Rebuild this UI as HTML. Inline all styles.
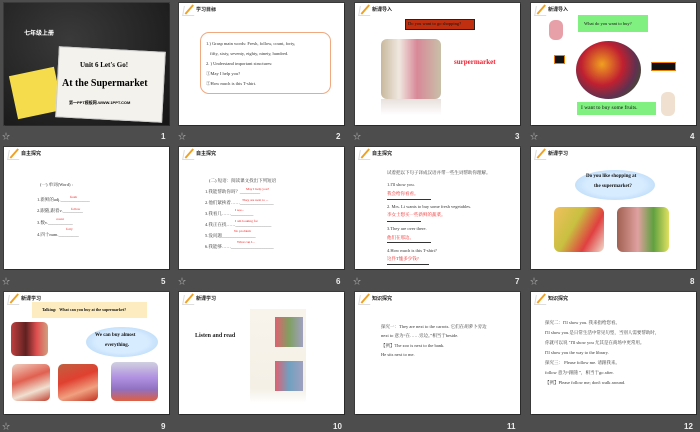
<!DOCTYPE html>
<html><head><meta charset="utf-8"><style>
*{margin:0;padding:0;box-sizing:border-box}
body{width:700px;height:431px;background:#4d4d4d;position:relative;overflow:hidden;font-family:"Liberation Serif","Noto Serif CJK SC",serif}
.s{position:absolute;width:165px;height:122px;background:#fff;overflow:hidden;box-shadow:1px 1px 0 #2a2a2a,0 0 0 1px #3a3a3a}
.a{position:absolute}
.n{position:absolute;color:#eee;font:bold 8px "Liberation Sans",sans-serif}
.st{position:absolute;color:#bbb;font:8px "Noto Sans CJK SC",sans-serif}
.hd{position:absolute;left:4px;top:3px;width:12px;height:10px;border-left:1px solid #ddd;border-bottom:1px solid #ddd;transform:skewX(-10deg)}
.hd:after{content:"";position:absolute;left:4px;top:-2px;width:2px;height:11px;background:#f0a020;transform:rotate(35deg)}
.ht{position:absolute;left:17px;top:3px;font:bold 5px "Noto Sans CJK SC",sans-serif;color:#222}
.t{position:absolute;font-size:4.5px;color:#333;white-space:nowrap;line-height:1}
.r{color:#e22}
.ln{position:absolute;height:0;border-top:.6px solid #333}
</style></head><body>

<!-- 1 -->
<div class="s" style="left:4px;top:3px;background:radial-gradient(ellipse at 40% 30%,#3a3a3a,#151515)">
<div class="a" style="left:20px;top:25px;color:#fff;font:bold 6px 'Noto Sans CJK SC',sans-serif">七年级上册</div>
<div class="a" style="left:9px;top:68px;width:46px;height:44px;background:#f4dc4c;transform:rotate(-12deg)"></div>
<div class="a" style="left:53px;top:46px;width:107px;height:71px;background:#f4f2ec;transform:rotate(3deg);border:1px solid #ccc"></div>
<div class="a" style="left:76px;top:58px;font:bold 7px 'Liberation Serif',serif">Unit 6 Let's Go!</div>
<div class="a" style="left:58px;top:75px;font:bold 10px 'Liberation Serif',serif">At the Supermarket</div>
<div class="a" style="left:65px;top:97px;font:bold 4px 'Liberation Sans','Noto Sans CJK SC',sans-serif">第一PPT模板网-WWW.1PPT.COM</div>
</div>
<div class="st" style="left:2px;top:131px">☆</div><div class="n" style="left:161px;top:132px">1</div>

<!-- 2 -->
<div class="s" style="left:179px;top:3px">
<div class="hd"></div><div class="ht">学习目标</div>
<div class="a" style="left:21px;top:29px;width:131px;height:62px;border:1px solid #f0a880;border-radius:9px"></div>
<div class="t" style="left:27px;top:39px">1.) Grasp main words: Fresh, follow, count, forty,</div>
<div class="t" style="left:31px;top:49px">fifty, sixty, seventy, eighty, ninety, hundred.</div>
<div class="t" style="left:27px;top:59px">2. ) Understand important structures:</div>
<div class="t" style="left:27px;top:69px">①May I help you?</div>
<div class="t" style="left:27px;top:79px">②How much is this T-shirt.</div>
</div>
<div class="st" style="left:178px;top:131px">☆</div><div class="n" style="left:336px;top:132px">2</div>

<!-- 3 -->
<div class="s" style="left:355px;top:3px">
<div class="hd"></div><div class="ht">新课导入</div>
<div class="a" style="left:50px;top:16px;width:70px;height:11px;background:#c03010;border:1px solid #222"></div>
<div class="t" style="left:53px;top:19px;color:#111">Do you want to go shopping?</div>
<div class="a" style="left:26px;top:36px;width:60px;height:60px;border-radius:6px;background:linear-gradient(90deg,#c8b89c,#f0e8e0 30%,#d88898 60%,#c8c0a8)"></div>
<div class="a" style="left:26px;top:96px;width:60px;height:16px;background:linear-gradient(#e8e0dc,#fff)"></div>
<div class="a" style="left:99px;top:55px;font:bold 7px 'Liberation Serif',serif;color:#f02030">surpermarket</div>
</div>
<div class="st" style="left:353px;top:131px">☆</div><div class="n" style="left:515px;top:132px">3</div>

<!-- 4 -->
<div class="s" style="left:531px;top:3px">
<div class="hd"></div><div class="ht">新课导入</div>
<div class="a" style="left:47px;top:12px;width:70px;height:17px;background:#80f080"></div>
<div class="t" style="left:53px;top:19px;color:#111">What do you want to buy?</div>
<div class="a" style="left:18px;top:17px;width:14px;height:20px;background:#e8a0a8;border-radius:6px"></div>
<div class="a" style="left:23px;top:52px;width:11px;height:9px;background:#111;border:1px solid #f08000"></div>
<div class="a" style="left:45px;top:38px;width:65px;height:58px;border-radius:50%;background:radial-gradient(circle at 40% 40%,#f0a020,#c02030 40%,#603050 65%,#306020 90%)"></div>
<div class="a" style="left:120px;top:59px;width:25px;height:9px;background:#111;border:1px solid #f08000"></div>
<div class="a" style="left:46px;top:99px;width:79px;height:13px;background:#80f080"></div>
<div class="t" style="left:50px;top:103px;font-size:5.5px;color:#111">I want to buy some fruits.</div>
<div class="a" style="left:130px;top:89px;width:14px;height:24px;background:#f0e0d0;border-radius:6px"></div>
</div>
<div class="st" style="left:530px;top:131px">☆</div><div class="n" style="left:690px;top:132px">4</div>

<!-- 5 -->
<div class="s" style="left:4px;top:147px">
<div class="hd"></div><div class="ht">自主探究</div>
<div class="t" style="left:36px;top:36px">(一) 单词(Word) :</div>
<div class="t" style="left:33px;top:51px">1.新鲜的adj._____________</div><div class="t r" style="left:66px;top:49px;font-size:3.5px">fresh</div>
<div class="t" style="left:33px;top:62px">2.跟随,跟着v._________</div><div class="t r" style="left:67px;top:61px;font-size:3.5px">follow</div>
<div class="t" style="left:33px;top:74px">3.数v.___________</div><div class="t r" style="left:52px;top:71px;font-size:3.5px">count</div>
<div class="t" style="left:33px;top:86px">4.四十num._________</div><div class="t r" style="left:62px;top:81px;font-size:3.5px">forty</div>
</div>
<div class="st" style="left:2px;top:276px">☆</div><div class="n" style="left:161px;top:277px">5</div>

<!-- 6 -->
<div class="s" style="left:179px;top:147px">
<div class="hd"></div><div class="ht">自主探究</div>
<div class="t" style="left:30px;top:32px">(二) 短语：阅读课文找出下列短语</div>
<div class="t" style="left:26px;top:43px">1.我能帮助你吗？_________</div><div class="t r" style="left:67px;top:41px;font-size:3.5px">May I help you?</div>
<div class="t" style="left:26px;top:54px">2.他们紧挨着……_______________</div><div class="t r" style="left:63px;top:52px;font-size:3.5px">They are next to ...</div>
<div class="t" style="left:26px;top:65px">3.我看几……__________</div><div class="t r" style="left:56px;top:62px;font-size:3.5px">I see...</div>
<div class="t" style="left:26px;top:76px">4.我正在找……________________</div><div class="t r" style="left:56px;top:73px;font-size:3.5px">I am looking for</div>
<div class="t" style="left:26px;top:87px">5.没问题_______________</div><div class="t r" style="left:55px;top:83px;font-size:3.5px">No problem</div>
<div class="t" style="left:26px;top:98px">6.我能够……___________________</div><div class="t r" style="left:58px;top:94px;font-size:3.5px">What can I...</div>
</div>
<div class="st" style="left:178px;top:276px">☆</div><div class="n" style="left:336px;top:277px">6</div>

<!-- 7 -->
<div class="s" style="left:355px;top:147px">
<div class="hd"></div><div class="ht">自主探究</div>
<div class="t" style="left:32px;top:24px">试着把以下句子译成汉语并带一些生词帮助你理解。</div>
<div class="t" style="left:32px;top:36px">1.I'll show you.</div><div class="t r" style="left:32px;top:45px">我会给你看看。</div><div class="ln" style="left:32px;top:52px;width:44px"></div>
<div class="t" style="left:32px;top:58px">2. Mrs. Li wants to buy some fresh vegetables.</div><div class="t r" style="left:32px;top:66px">李女士想买一些新鲜的蔬菜。</div><div class="ln" style="left:32px;top:74px;width:34px"></div>
<div class="t" style="left:32px;top:80px">3.They are over there.</div><div class="t r" style="left:32px;top:89px">他们在那边。</div><div class="ln" style="left:32px;top:95px;width:44px"></div>
<div class="t" style="left:32px;top:102px">4.How much is this T-shirt?</div><div class="t r" style="left:32px;top:110px">这件T恤多少钱?</div><div class="ln" style="left:32px;top:117px;width:42px"></div>
</div>
<div class="st" style="left:353px;top:276px">☆</div><div class="n" style="left:515px;top:277px">7</div>

<!-- 8 -->
<div class="s" style="left:531px;top:147px">
<div class="hd"></div><div class="ht">新课学习</div>
<div class="a" style="left:44px;top:23px;width:80px;height:30px;border-radius:50%;background:radial-gradient(ellipse,#d8ecff 50%,#a8d0f4)"></div>
<div class="t" style="left:55px;top:27px;font-weight:bold;font-size:5px;color:#111">Do you like shopping at</div>
<div class="t" style="left:63px;top:37px;font-weight:bold;font-size:5px;color:#111">the supermarket?</div>
<div class="a" style="left:23px;top:60px;width:50px;height:45px;border-radius:6px;background:linear-gradient(120deg,#f0c060,#c8c040 40%,#e04040 70%,#f0e0d0)"></div>
<div class="a" style="left:86px;top:60px;width:52px;height:45px;border-radius:6px;background:linear-gradient(90deg,#a06050,#e0a0a0 40%,#60a040 70%,#e0e060)"></div>
</div>
<div class="st" style="left:530px;top:276px">☆</div><div class="n" style="left:690px;top:277px">8</div>

<!-- 9 -->
<div class="s" style="left:4px;top:292px">
<div class="hd"></div><div class="ht">新课学习</div>
<div class="a" style="left:28px;top:10px;width:115px;height:16px;background:#fcecc0"></div>
<div class="t" style="left:38px;top:16px;font-weight:bold;font-size:4px;color:#111">Talking: &nbsp; What can you buy at the supermarket?</div>
<div class="a" style="left:7px;top:30px;width:37px;height:34px;border-radius:5px;background:linear-gradient(90deg,#c04040,#602020 40%,#e05050 70%,#d0a080)"></div>
<div class="a" style="left:82px;top:35px;width:72px;height:30px;border-radius:50%;background:radial-gradient(ellipse,#d8ecff 50%,#a8d0f4)"></div>
<div class="t" style="left:91px;top:41px;font-weight:bold;font-size:5px;color:#111">We can buy almost</div>
<div class="t" style="left:101px;top:51px;font-weight:bold;font-size:5px;color:#111">everything.</div>
<div class="a" style="left:8px;top:72px;width:38px;height:37px;border-radius:5px;background:linear-gradient(160deg,#f0d0c0,#e06050 40%,#f0e0d0 70%,#c04030)"></div>
<div class="a" style="left:54px;top:72px;width:40px;height:37px;border-radius:5px;background:linear-gradient(160deg,#c06040,#e04030 40%,#f0a080 70%,#c03020)"></div>
<div class="a" style="left:107px;top:70px;width:47px;height:39px;border-radius:5px;background:linear-gradient(180deg,#d0d0e0,#b090e0 40%,#9070c0 70%,#e06040)"></div>
</div>
<div class="st" style="left:2px;top:421px">☆</div><div class="n" style="left:161px;top:422px">9</div>

<!-- 10 -->
<div class="s" style="left:179px;top:292px">
<div class="hd"></div><div class="ht">新课学习</div>
<div class="a" style="left:16px;top:41px;font:bold 6px 'Liberation Serif',serif;color:#222">Listen and read</div>
<div class="a" style="left:71px;top:17px;width:56px;height:94px;background:linear-gradient(#f8f4ec,#f4f0e6 85%,#fff)"></div>
<div class="a" style="left:96px;top:25px;width:28px;height:30px;background:linear-gradient(90deg,#e06070,#80a060,#a0a0c0)"></div>
<div class="a" style="left:96px;top:69px;width:28px;height:30px;background:linear-gradient(90deg,#e06070,#70a0c0,#a0a0c0)"></div>
</div>
<div class="n" style="left:333px;top:422px">10</div>

<!-- 11 -->
<div class="s" style="left:355px;top:292px">
<div class="hd"></div><div class="ht">知识探究</div>
<div class="t" style="left:26px;top:33px">探究一：They are next to the carrots. 它们在胡萝卜旁边</div>
<div class="t" style="left:26px;top:42px">next to 意为“在……旁边。”相当于beside.</div>
<div class="t" style="left:26px;top:52px">【例】The zoo is next to the bank.</div>
<div class="t" style="left:26px;top:61px">He sits next to me.</div>
</div>
<div class="n" style="left:507px;top:422px">11</div>

<!-- 12 -->
<div class="s" style="left:531px;top:292px">
<div class="hd"></div><div class="ht">知识探究</div>
<div class="t" style="left:14px;top:29px">探究二：I'll show you. 我来指给您看。</div>
<div class="t" style="left:14px;top:39px">I'll show you.是日常生活中常见句型，当别人需要帮助时，</div>
<div class="t" style="left:14px;top:49px">你就可以说 "I'll show you 尤其是在商场中更常用。</div>
<div class="t" style="left:14px;top:59px">I'll show you the way to the library.</div>
<div class="t" style="left:14px;top:69px">探究三： Please follow me. 请跟我来。</div>
<div class="t" style="left:14px;top:79px">follow 意为“跟随 ”，相当于go after.</div>
<div class="t" style="left:14px;top:89px">【例】Please follow me; don't walk around.</div>
</div>
<div class="n" style="left:684px;top:422px">12</div>

</body></html>
